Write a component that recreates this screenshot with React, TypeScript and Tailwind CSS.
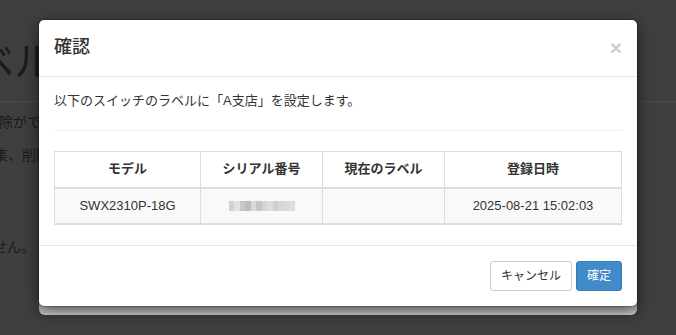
import React from "react";

const font = { fontFamily: "'Liberation Sans', 'Noto Sans CJK JP', sans-serif" };

const blur = [
  "#d2d2d2", "#e2e2e2", "#c9c9c9", "#bdbdbd", "#d9d9d9", "#c6c6c6",
  "#d5d5d5", "#dddddd", "#d0d0d0", "#d8d8d8", "#dadada", "#dedede",
];

export default function App() {
  return (
    <div
      className="relative w-[676px] h-[335px] overflow-hidden bg-[#3f3f3f] text-[#1b1b1b]"
      style={font}
    >
      {/* background page */}
      <div className="pt-[41px]">
        <div className="-ml-[26px] text-[40px] leading-[42px] whitespace-nowrap">ベル</div>
        <div className="mt-[18px] h-px bg-[#4a4a4a]" />
        <div className="-ml-[1px] mt-[10px] text-[14px] leading-[20px] whitespace-nowrap">除ができます</div>
        <div className="-ml-[6px] mt-[13px] text-[14px] leading-[20px] whitespace-nowrap">集、削除</div>
        <div className="-ml-[7px] mt-[72px] text-[14px] leading-[20px] whitespace-nowrap">せん。</div>
      </div>

      {/* modal */}
      <div className="absolute left-[38px] top-[19px] w-[600px]">
        <div className="absolute left-[1px] right-[1px] -bottom-[8px] h-[20px] rounded-b-[6px] bg-gradient-to-b from-[#8e8e8e] to-[#d6d6d6]" />
        <div className="relative rounded-[6px] border border-black/20 bg-white bg-clip-padding shadow-[0_5px_15px_rgba(0,0,0,0.5)] text-[#333]">
          <div className="flex items-center justify-between border-b border-[#e5e5e5] p-[15px]">
            <div className="text-[18px] font-medium leading-[25.7px]">確認</div>
            <div className="text-[21px] font-bold leading-none text-black opacity-20">×</div>
          </div>
          <div className="p-[15px] text-[13px] leading-[18.57px]">
            <p>以下のスイッチのラベルに「A支店」を設定します。</p>
            <hr className="my-5 border-0 border-t border-[#eeeeee]" />
            <table className="mb-[5px] w-full table-fixed border-collapse border border-[#dddddd]">
              <colgroup>
                <col className="w-[146px]" />
                <col className="w-[122px]" />
                <col className="w-[122px]" />
                <col />
              </colgroup>
              <thead>
                <tr>
                  <th className="border border-b-2 border-[#dddddd] p-2 text-center font-bold">モデル</th>
                  <th className="border border-b-2 border-[#dddddd] p-2 text-center font-bold">シリアル番号</th>
                  <th className="border border-b-2 border-[#dddddd] p-2 text-center font-bold">現在のラベル</th>
                  <th className="border border-b-2 border-[#dddddd] p-2 text-center font-bold">登録日時</th>
                </tr>
              </thead>
              <tbody>
                <tr className="bg-[#f9f9f9]">
                  <td className="border border-b-2 border-[#dddddd] p-2 text-center">SWX2310P-18G</td>
                  <td className="border border-b-2 border-[#dddddd] p-2">
                    <div className="mx-auto flex h-[10px] w-[66px]">
                      {blur.map((c, i) => (
                        <div key={i} className="h-full flex-1" style={{ backgroundColor: c }} />
                      ))}
                    </div>
                  </td>
                  <td className="border border-b-2 border-[#dddddd] p-2 text-center"></td>
                  <td className="border border-b-2 border-[#dddddd] p-2 text-center">2025-08-21 15:02:03</td>
                </tr>
              </tbody>
            </table>
          </div>
          <div className="flex justify-end gap-[4px] border-t border-[#e5e5e5] p-[15px]">
            <button className="h-[30px] rounded-[3px] border border-[#cccccc] bg-white px-[10px] text-[12px] leading-[1.5] text-[#333]">
              キャンセル
            </button>
            <button className="h-[30px] rounded-[3px] border border-[#357ebd] bg-[#428bca] px-[10px] text-[12px] leading-[1.5] text-white">
              確定
            </button>
          </div>
        </div>
      </div>
    </div>
  );
}
